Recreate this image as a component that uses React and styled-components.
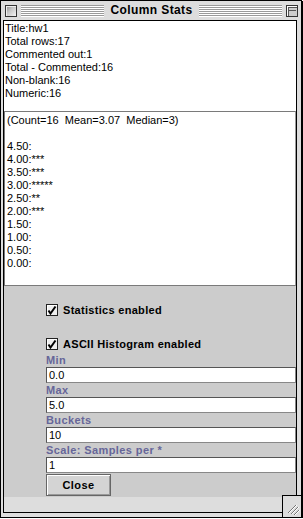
import React from "react";
import styled, { createGlobalStyle } from "styled-components";

const GlobalStyle = createGlobalStyle`
  body {
    margin: 0;
    background: #ffffff;
    font-family: "Liberation Sans", Arial, sans-serif;
  }
`;

const infoLines = [
  "Title:hw1",
  "Total rows:17",
  "Commented out:1",
  "Total - Commented:16",
  "Non-blank:16",
  "Numeric:16",
];

const histLines = [
  "(Count=16  Mean=3.07  Median=3)",
  "",
  "4.50:",
  "4.00:***",
  "3.50:***",
  "3.00:*****",
  "2.50:**",
  "2.00:***",
  "1.50:",
  "1.00:",
  "0.50:",
  "0.00:",
];

const fields = [
  { label: "Min", value: "0.0" },
  { label: "Max", value: "5.0" },
  { label: "Buckets", value: "10" },
  { label: "Scale: Samples per *", value: "1" },
];

const CheckMark = () => (
  <svg width="10" height="10" viewBox="0 0 10 10">
    <path d="M1.5 5.5 L3.5 8.5 L8.5 1.5" fill="none" stroke="#000" strokeWidth="2" />
  </svg>
);

const Grip = () => (
  <svg width="18" height="21" viewBox="0 0 18 21">
    <path d="M5 17 L13 9 M8 18 L15 11 M11 19 L16 14" stroke="#777" strokeWidth="1" />
    <path d="M6 17 L14 9 M9 18 L16 11 M12 19 L17 14" stroke="#fff" strokeWidth="1" />
  </svg>
);

const App = () => {
  return (
    <>
      <GlobalStyle />
      <Window>
        <TitleBar>
          <CloseBox />
          <Stripes />
          <Title>Column Stats</Title>
          <Stripes />
          <ZoomBox />
        </TitleBar>
        <Content>
          <InfoArea>
            {infoLines.map((line) => (
              <Line key={line}>{line}</Line>
            ))}
          </InfoArea>
          <HistBox>
            {histLines.map((line, i) => (
              <Line key={i}>{line || "\u00a0"}</Line>
            ))}
          </HistBox>
          <Panel>
            <CheckRow>
              <CheckBox>
                <CheckMark />
              </CheckBox>
              <CheckLabel>Statistics enabled</CheckLabel>
            </CheckRow>
            <CheckRow spaced>
              <CheckBox>
                <CheckMark />
              </CheckBox>
              <CheckLabel>ASCII Histogram enabled</CheckLabel>
            </CheckRow>
            {fields.map((f) => (
              <Field key={f.label}>
                <FieldLabel>{f.label}</FieldLabel>
                <Input>{f.value}</Input>
              </Field>
            ))}
            <Button>Close</Button>
          </Panel>
          <Footer />
        </Content>
        <GrowBox>
          <Grip />
        </GrowBox>
      </Window>
    </>
  );
};

const Window = styled.div`
  position: relative;
  box-sizing: border-box;
  width: 302px;
  height: 518px;
  display: flex;
  flex-direction: column;
  background: #dddddd;
  border: 1px solid #000;
  box-shadow: 1px 1px 0 #000;
  padding: 0 4px 4px 2px;
`;

const TitleBar = styled.div`
  height: 19px;
  display: flex;
  align-items: center;
  margin: 0 -4px 0 -2px;
  padding: 0 3px 0 4px;
  background: #dddddd;
`;

const CloseBox = styled.div`
  box-sizing: border-box;
  width: 12px;
  height: 12px;
  flex-shrink: 0;
  border: 1px solid #333;
  background: linear-gradient(135deg, #8a8a8a 0%, #c8c8c8 45%, #f4f4f4 100%);
  box-shadow: inset 1px 1px 0 #eeeeee;
`;

const ZoomBox = styled.div`
  box-sizing: border-box;
  position: relative;
  width: 12px;
  height: 12px;
  flex-shrink: 0;
  border: 1px solid #333;
  background: #cccccc;
  box-shadow: inset 1px 1px 0 #fff, inset 2px 2px 0 #555;

  &::after {
    content: "";
    position: absolute;
    left: 2px;
    right: 1px;
    top: 4px;
    height: 1px;
    background: #555;
  }
`;

const Stripes = styled.div`
  flex: 1;
  height: 12px;
  margin: 1px 4px 0;
  background: repeating-linear-gradient(
    to bottom,
    #9a9a9a 0,
    #9a9a9a 1px,
    #ffffff 1px,
    #ffffff 2px
  );
`;

const Title = styled.div`
  font-weight: bold;
  font-size: 12px;
  letter-spacing: 0.4px;
  color: #000;
  padding: 0 2px;
  line-height: 19px;
`;

const Content = styled.div`
  flex: 1;
  display: flex;
  flex-direction: column;
  border: 1px solid #000;
  background: #cccccc;
  min-height: 0;
`;

const InfoArea = styled.div`
  height: 90px;
  box-sizing: border-box;
  padding: 1px 0 0 1px;
  background: #fff;
`;

const Line = styled.div`
  font-size: 11px;
  line-height: 13px;
  height: 13px;
  color: #000;
  white-space: pre;
`;

const HistBox = styled.div`
  height: 175px;
  box-sizing: border-box;
  padding: 2px 0 0 2px;
  background: #fff;
  border: 1px solid #7a7a7a;
  border-right-color: #9a9a9a;
`;

const Panel = styled.div`
  flex: 1;
  display: flex;
  flex-direction: column;
  align-items: flex-start;
  padding: 17px 0 0 42px;
  background: #cccccc;
`;

const CheckRow = styled.div`
  display: flex;
  align-items: center;
  height: 14px;
  margin-top: ${({ spaced }) => (spaced ? "20px" : "0")};
  margin-bottom: ${({ spaced }) => (spaced ? "2px" : "0")};
`;

const CheckBox = styled.div`
  box-sizing: border-box;
  width: 12px;
  height: 12px;
  display: flex;
  align-items: center;
  justify-content: center;
  border: 1px solid #222;
  background: #eeeeee;
  box-shadow: inset 1px 1px 0 #fff;
`;

const CheckLabel = styled.span`
  margin-left: 5px;
  font-size: 11px;
  font-weight: bold;
  letter-spacing: 0.3px;
  color: #000;
`;

const Field = styled.div`
  display: flex;
  flex-direction: column;
  align-self: stretch;
`;

const FieldLabel = styled.div`
  height: 14px;
  line-height: 14px;
  font-size: 11px;
  font-weight: bold;
  letter-spacing: 0.4px;
  color: #666699;
`;

const Input = styled.div`
  box-sizing: border-box;
  height: 16px;
  padding-left: 2px;
  font-size: 11px;
  line-height: 14px;
  color: #000;
  background: #fff;
  border: 1px solid #555;
  border-right-color: #888;
  border-bottom-color: #888;
`;

const Button = styled.div`
  box-sizing: border-box;
  width: 65px;
  height: 22px;
  margin-top: 1px;
  display: flex;
  align-items: center;
  justify-content: center;
  font-size: 11px;
  font-weight: bold;
  letter-spacing: 0.4px;
  color: #000;
  background: #d4d4d4;
  border: 1px solid #666;
  box-shadow: inset 1px 1px 0 #fff, inset -1px -1px 0 #999;
`;

const Footer = styled.div`
  height: 15px;
  background: #dddddd;
`;

const GrowBox = styled.div`
  position: absolute;
  right: 0;
  bottom: 0;
  box-sizing: border-box;
  width: 19px;
  height: 22px;
  background: #dddddd;
  border-top: 1px solid #000;
  border-left: 1px solid #000;
  display: flex;
`;

export default App;
